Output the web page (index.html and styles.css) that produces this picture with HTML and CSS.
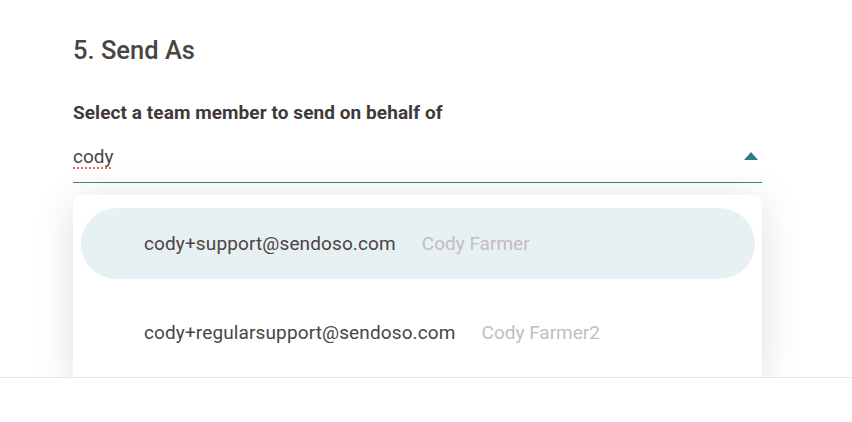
FILE: index.html
```html
<!DOCTYPE html>
<html lang="en">
<head>
    <meta charset="UTF-8">
    <meta name="viewport" content="width=device-width, initial-scale=1.0">
    <title>Send As</title>
    <link rel="stylesheet" href="styles.css">
</head>
<body>
    <div class="main">
        <div class="section">
            <h2 class="title">5. Send As</h2>
            <label class="label" for="member">Select a team member to send on behalf of</label>
            <div class="field">
                <span class="value" id="member">cody</span>
                <svg class="caret" width="14" height="8" viewBox="0 0 14 8"><path d="M7 0 L14 8 L0 8 Z" fill="#2f7c89"/></svg>
            </div>
            <ul class="menu">
                <li class="option active">
                    <span class="email">cody+support@sendoso.com</span>
                    <span class="name">Cody Farmer</span>
                </li>
                <li class="option">
                    <span class="email">cody+regularsupport@sendoso.com</span>
                    <span class="name">Cody Farmer2</span>
                </li>
            </ul>
        </div>
    </div>
    <div class="footer"></div>
</body>
</html>
```

FILE: styles.css
```css
body {
    margin: 0;
    background: #fff;
    font-family: Roboto, "Liberation Sans", sans-serif;
    color: #4a4541;
}
.main {
    height: 377px;
    overflow: hidden;
}
.section {
    width: 689px;
    margin-left: 73px;
    padding-top: 36px;
}
.title {
    margin: 0;
    font-size: 25.5px;
    font-weight: 500;
    line-height: 28px;
    color: #4a4541;
}
.label {
    display: block;
    margin-top: 37px;
    font-size: 19px;
    font-weight: 700;
    line-height: 24px;
    letter-spacing: 0.07px;
    color: #3f3a36;
}
.field {
    display: flex;
    align-items: center;
    justify-content: space-between;
    margin-top: 20px;
    padding-bottom: 13px;
    border-bottom: 1px solid #3a8290;
}
.value {
    font-size: 19px;
    line-height: 24px;
    text-decoration: underline dotted #e36a5e;
    text-decoration-thickness: 2px;
    text-underline-offset: 4px;
}
.caret {
    margin-right: 4px;
    margin-bottom: 2px;
}
.menu {
    list-style: none;
    margin: 12px 0 0;
    padding: 13px 7px 13px 8px;
    background: #fff;
    border-radius: 6px;
    box-shadow: 0 6px 40px rgba(0,0,0,0.13);
}
.option {
    display: flex;
    align-items: center;
    gap: 26px;
    height: 71px;
    padding-left: 63px;
    border-radius: 36px;
    font-size: 19px;
}
.option + .option {
    margin-top: 18px;
}
.option.active {
    background: #e7f0f3;
}
.email {
    letter-spacing: 0.12px;
}
.name {
    color: #c2bebb;
}
.footer {
    height: 44px;
    border-top: 1px solid #e6e6e6;
    background: #fff;
}
```
